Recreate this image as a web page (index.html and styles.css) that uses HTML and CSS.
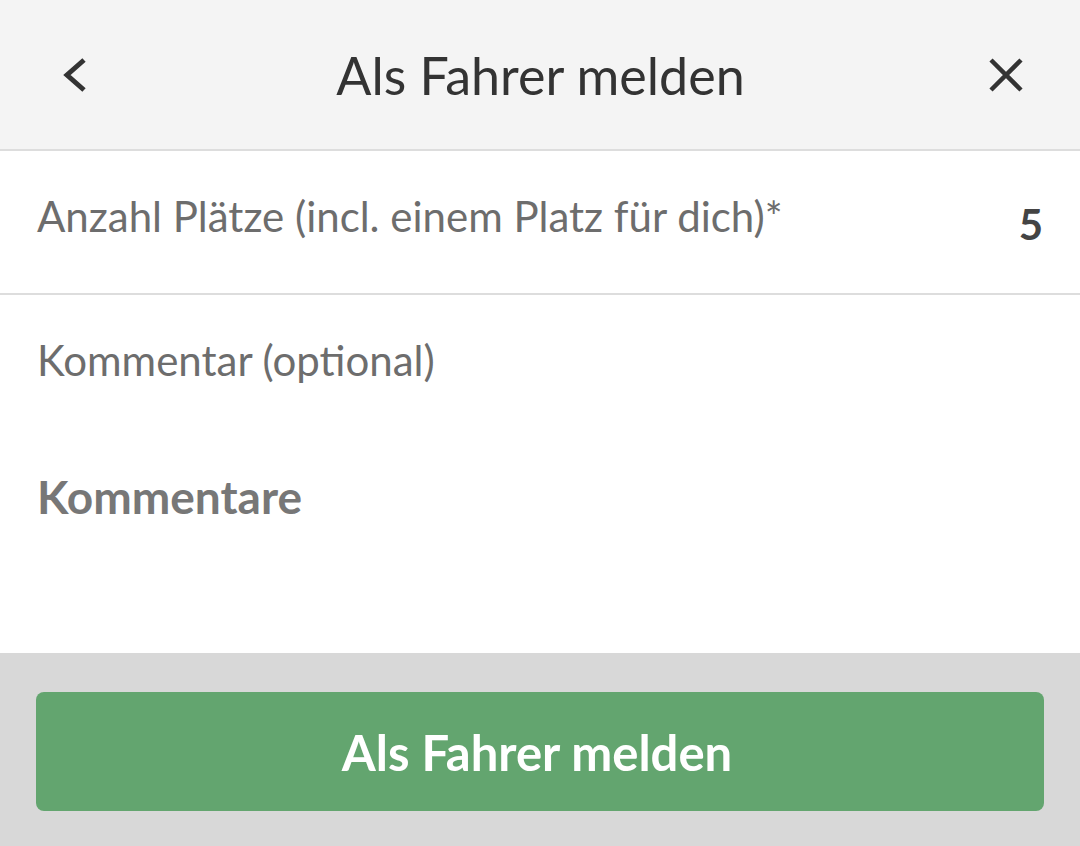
FILE: index.html
```html
<!DOCTYPE html>
<html lang="de">
<head>
<meta charset="utf-8">
<link rel="stylesheet" href="styles.css">
</head>
<body>
<div class="screen">
  <header class="topbar">
    <button class="icon-btn back" aria-label="Zurück">
      <svg width="32" height="40" viewBox="0 0 32 40"><path d="M27 5 L10 20 L27 35" fill="none" stroke="#333" stroke-width="5"/></svg>
    </button>
    <h1 class="title">Als Fahrer melden</h1>
    <button class="icon-btn close" aria-label="Schließen">
      <svg width="36" height="36" viewBox="0 0 36 36"><path d="M3 3 L33 33 M33 3 L3 33" fill="none" stroke="#333" stroke-width="4.5"/></svg>
    </button>
  </header>
  <div class="field-row">
    <span class="label">Anzahl Plätze (incl. einem Platz für dich)*</span>
    <span class="value">5</span>
  </div>
  <div class="comment-area">
    <div class="placeholder">Kommentar (optional)</div>
    <div class="section-title">Kommentare</div>
  </div>
  <footer class="footer">
    <button class="primary">Als Fahrer melden</button>
  </footer>
</div>
</body>
</html>
```
FILE: styles.css
```css
html, body {
  margin: 0;
  padding: 0;
}
body {
  font-family: Lato, "Open Sans", sans-serif;
  background: #fff;
}
.screen {
  width: 1080px;
  height: 846px;
  display: flex;
  flex-direction: column;
}
.topbar {
  height: 149px;
  background: #f4f4f4;
  border-bottom: 2px solid #dddddd;
  display: grid;
  grid-template-columns: 1fr auto 1fr;
  align-items: center;
  padding: 0 56px 0 57px;
  box-sizing: content-box;
}
.icon-btn {
  background: none;
  border: 0;
  padding: 0;
  display: flex;
  align-items: center;
}
.back { justify-self: start; }
.close { justify-self: end; }
.title {
  margin: 0;
  font-weight: 400;
  font-size: 52px;
  color: #333;
}
.field-row {
  height: 142px;
  border-bottom: 2px solid #dddddd;
  display: flex;
  align-items: center;
  justify-content: space-between;
  padding: 0 37px 0 37px;
}
.label {
  font-size: 42px;
  color: #6d6d6d;
  margin-bottom: 12px;
}
.value {
  font-size: 42px;
  font-weight: 700;
  color: #444;
  padding-top: 4px;
}
.comment-area {
  flex: 1;
  padding: 40px 37px 0 37px;
}
.placeholder {
  font-size: 42px;
  color: #6d6d6d;
}
.section-title {
  margin-top: 84px;
  font-size: 46px;
  font-weight: 700;
  color: #777;
}
.footer {
  height: 193px;
  background: #d8d8d8;
  padding: 39px 36px 0 36px;
  box-sizing: border-box;
}
.primary {
  width: 100%;
  height: 119px;
  background: #63a56f;
  border: 0;
  border-radius: 8px;
  color: #fff;
  font-family: Lato, sans-serif;
  font-weight: 700;
  font-size: 49px;
  padding: 0 6px 0 0;
}
```
